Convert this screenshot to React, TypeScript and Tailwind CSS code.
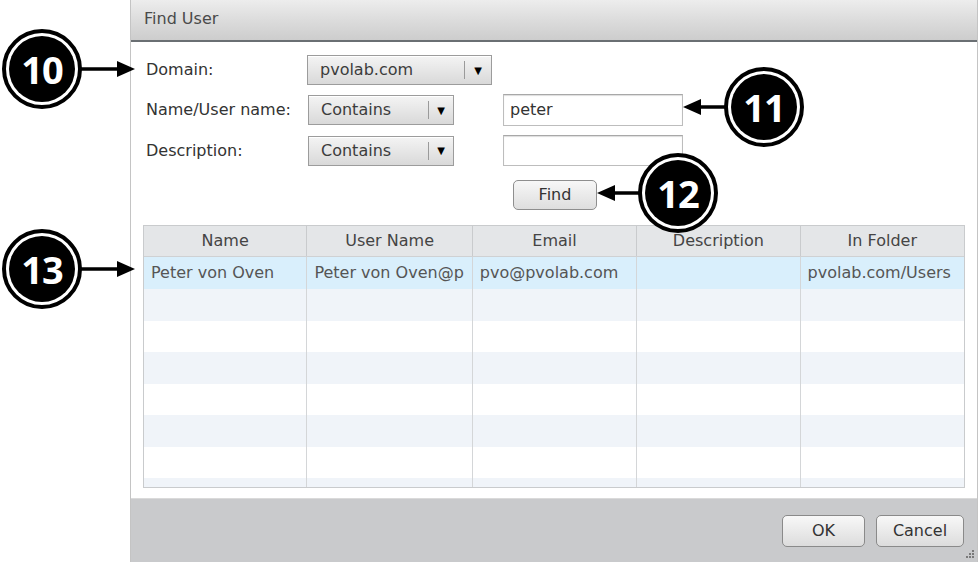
import React from "react";

const columns = [
  { label: "Name", width: 164 },
  { label: "User Name", width: 166 },
  { label: "Email", width: 165 },
  { label: "Description", width: 164 },
  { label: "In Folder", width: 164 },
];

const firstRow = ["Peter von Oven", "Peter von Oven@p", "pvo@pvolab.com", "", "pvolab.com/Users"];

function Select({ value, width, sep }: { value: string; width: string; sep: string }) {
  return (
    <div
      className={`flex h-[30px] ${width} items-center border border-[#9c9c9c] bg-gradient-to-b from-[#f4f4f4] to-[#d9d9d9] shadow-[inset_0_1px_0_#fff]`}
    >
      <span className={`${sep} pl-[12px] text-[16px] text-[#3c3c3c]`}>{value}</span>
      <span className="h-[18px] w-px bg-[#9a9a9a]" />
      <span className="flex flex-1 items-center justify-center text-[10px] text-black">▼</span>
    </div>
  );
}

function Marker({ n, x, y, tip, dir }: { n: string; x: number; y: number; tip: number; dir: "left" | "right" }) {
  const lineFrom = dir === "right" ? x + 39 : x - 39;
  const minX = Math.min(lineFrom, tip);
  const w = Math.abs(lineFrom - tip);
  return (
    <>
      <div
        className="absolute flex h-[80px] w-[80px] items-center justify-center rounded-full border-[4px] border-black bg-white p-[3px]"
        style={{ left: x - 40, top: y - 40 }}
      >
        <div className="flex h-full w-full items-center justify-center rounded-full bg-black font-['Open_Sans',sans-serif] text-[38px] font-bold leading-none tracking-[-1px] text-white">
          {n}
        </div>
      </div>
      <svg className="absolute" style={{ left: minX, top: y - 10 }} width={w} height={20}>
        {dir === "right" ? (
          <>
            <line x1={0} y1={10} x2={w - 16} y2={10} stroke="black" strokeWidth={3.5} />
            <polygon points={`${w - 18},2 ${w},10 ${w - 18},18`} fill="black" />
          </>
        ) : (
          <>
            <line x1={16} y1={10} x2={w} y2={10} stroke="black" strokeWidth={3.5} />
            <polygon points={`18,2 0,10 18,18`} fill="black" />
          </>
        )}
      </svg>
    </>
  );
}

export default function App() {
  const rows = Array.from({ length: 8 });
  return (
    <div className="relative h-[562px] w-[980px] overflow-hidden bg-white font-['DejaVu_Sans',sans-serif]">
      <div className="ml-[130px] flex h-full w-[848px] flex-col border-x border-[#c4c4c4]">
        {/* title */}
        <div className="flex h-[42px] shrink-0 items-center border-b-2 border-[#6a6f73] bg-gradient-to-b from-[#ededed] via-[#dcdcdc] to-[#cdcdcd] pl-[13px] pb-[2px]">
          <span className="text-[16px] text-[#4a4a4a]">Find User</span>
        </div>

        {/* body */}
        <div className="flex flex-1 flex-col bg-white px-[12px]">
          <div className="mt-[13px] flex flex-col gap-[9px] pl-[3px]">
            <div className="flex items-center">
              <span className="w-[161px] text-[16px] text-[#333]">Domain:</span>
              <Select value="pvolab.com" width="w-[185px]" sep="w-[156px]" />
            </div>
            <div className="flex items-center">
              <span className="w-[162px] text-[16px] text-[#333]">Name/User name:</span>
              <Select value="Contains" width="w-[146px]" sep="w-[119px]" />
              <div className="ml-[49px] flex h-[32px] w-[180px] items-center border border-[#bdbdbd] border-t-[#a8a8a8] pl-[6px] text-[16px] text-[#333] shadow-[inset_0_1px_1px_#ddd]">
                peter
              </div>
            </div>
            <div className="flex items-center">
              <span className="w-[162px] text-[16px] text-[#333]">Description:</span>
              <Select value="Contains" width="w-[146px]" sep="w-[119px]" />
              <div className="ml-[49px] h-[31px] w-[180px] border border-[#bdbdbd] border-t-[#a8a8a8] shadow-[inset_0_1px_1px_#ddd]" />
            </div>
          </div>

          <div className="mt-[14px] flex pl-[370px]">
            <button className="h-[30px] w-[84px] rounded-[5px] border border-[#8e8e8e] bg-gradient-to-b from-[#f7f7f7] to-[#dedede] text-[16px] text-[#333]">
              Find
            </button>
          </div>

          {/* grid */}
          <div className="mt-[15px] h-[263px] overflow-hidden border border-[#c9cbcd]">
            <div className="flex h-[31px] border-b border-[#cfd1d3] bg-[#e4e6e8]">
              {columns.map((c, i) => (
                <div
                  key={c.label}
                  className={`flex items-center justify-center text-[16px] text-[#444] ${i < 4 ? "border-r border-[#c9cbcd]" : ""}`}
                  style={{ width: c.width }}
                >
                  {c.label}
                </div>
              ))}
            </div>
            {rows.map((_, r) => (
              <div
                key={r}
                className={`flex ${r === 0 ? "h-[32px] bg-[#d9effc]" : "h-[31.5px]"} ${r > 0 && r % 2 === 1 ? "bg-[#f0f4f9]" : ""} ${r > 0 && r % 2 === 0 ? "bg-white" : ""}`}
              >
                {columns.map((c, i) => (
                  <div
                    key={c.label}
                    className={`flex items-center overflow-hidden whitespace-nowrap pl-[7px] text-[16px] text-[#555] ${i < 4 ? "border-r border-[#d4d6d8]" : ""}`}
                    style={{ width: c.width }}
                  >
                    {r === 0 ? firstRow[i] : ""}
                  </div>
                ))}
              </div>
            ))}
          </div>
        </div>

        {/* footer */}
        <div className="relative flex h-[64px] shrink-0 items-center justify-end gap-[11px] border-t border-[#dadada] bg-[#c9cacc] pr-[13px]">
          <button className="h-[32px] w-[83px] rounded-[5px] border border-[#8a8a8a] bg-gradient-to-b from-[#f8f8f8] to-[#dcdcdc] text-[16px] text-[#333]">
            OK
          </button>
          <button className="h-[32px] w-[88px] rounded-[5px] border border-[#8a8a8a] bg-gradient-to-b from-[#f8f8f8] to-[#dcdcdc] text-[16px] text-[#333]">
            Cancel
          </button>
          <svg className="absolute bottom-[3px] right-[2px]" width="10" height="10">
            <rect x="7" y="1" width="2" height="2" fill="#7a7a7a" />
            <rect x="4" y="4" width="2" height="2" fill="#7a7a7a" />
            <rect x="7" y="4" width="2" height="2" fill="#7a7a7a" />
            <rect x="1" y="7" width="2" height="2" fill="#7a7a7a" />
            <rect x="4" y="7" width="2" height="2" fill="#7a7a7a" />
            <rect x="7" y="7" width="2" height="2" fill="#7a7a7a" />
          </svg>
        </div>
      </div>

      <Marker n="10" x={42} y={69} tip={135} dir="right" />
      <Marker n="11" x={764} y={107} tip={683} dir="left" />
      <Marker n="12" x={678} y={193} tip={597} dir="left" />
      <Marker n="13" x={42} y={269} tip={135} dir="right" />
    </div>
  );
}
